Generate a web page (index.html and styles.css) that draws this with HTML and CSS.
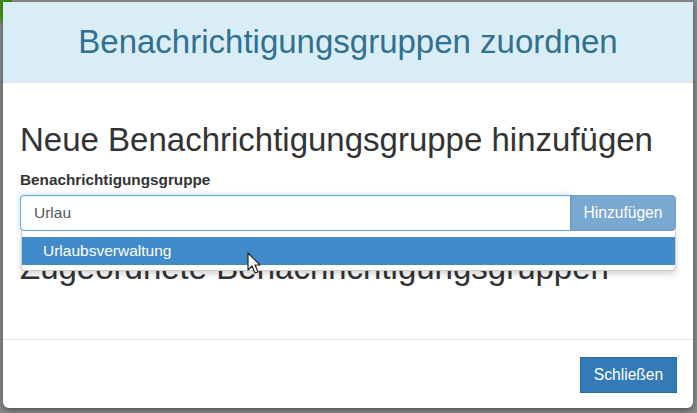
FILE: index.html
```html
<!DOCTYPE html>
<html lang="de">
<head>
  <meta charset="UTF-8">
  <meta name="viewport" content="width=device-width, initial-scale=1.0">
  <title>Benachrichtigungsgruppen zuordnen</title>
  <link rel="stylesheet" href="styles.css">
</head>
<body>
  <div class="backdrop-tab"></div>
  <div class="modal">
    <div class="modal-header">
      <h4 class="modal-title">Benachrichtigungsgruppen zuordnen</h4>
    </div>
    <div class="modal-body">
      <h2>Neue Benachrichtigungsgruppe hinzufügen</h2>
      <label class="control-label">Benachrichtigungsgruppe</label>
      <div class="input-wrap">
        <div class="input-group">
          <input type="text" class="form-control" value="Urlau">
          <button class="btn btn-primary" disabled>Hinzufügen</button>
        </div>
        <ul class="dropdown">
          <li class="active">Urlaubsverwaltung</li>
        </ul>
        <svg class="cursor" width="16" height="24" viewBox="0 0 16 24">
          <path d="M1 1 L1 18 L5 14 L8 21 L11 20 L8 13 L13 13 Z" fill="#fff" stroke="#222" stroke-width="1.2" stroke-linejoin="round"/>
        </svg>
      </div>
      <h2 class="assigned">Zugeordnete Benachrichtigungsgruppen</h2>
    </div>
    <div class="modal-footer">
      <button class="btn btn-primary">Schließen</button>
    </div>
  </div>
</body>
</html>
```

FILE: styles.css
```css
html, body {
  margin: 0;
  height: 100%;
}
body {
  background-color: #8b8b8b;
  font-family: "Liberation Sans", Arial, sans-serif;
  color: #333;
  overflow: hidden;
  position: relative;
}
.backdrop-tab {
  position: absolute;
  left: 0;
  top: 0;
  width: 12px;
  height: 22px;
  background: linear-gradient(#3d8a12, #5aa51e);
}
.modal {
  position: relative;
  margin: 2px 4px 0 3px;
  height: 406px;
  background-color: #fff;
  border-radius: 0 0 6px 6px;
  box-shadow: 0 2px 6px rgba(0, 0, 0, 0.45);
  display: flex;
  flex-direction: column;
}
.modal-header {
  height: 80px;
  background-color: #d9edf7;
  border-bottom: 1px solid #e5e5e5;
  display: flex;
  align-items: center;
  justify-content: center;
}
.modal-title {
  margin: 0;
  font-size: 33px;
  font-weight: normal;
  color: #31708f;
}
.modal-body {
  flex: 1;
  padding: 0 17px;
  overflow: hidden;
}
.modal-body h2 {
  margin: 37px 0 0;
  font-size: 33px;
  font-weight: normal;
  line-height: 40px;
  color: #333;
}
.control-label {
  display: block;
  margin-top: 11px;
  font-size: 15.3px;
  font-weight: bold;
  color: #333;
}
.input-wrap {
  position: relative;
  margin-top: 6px;
}
.input-group {
  display: flex;
  height: 36px;
}
.form-control {
  flex: 1;
  margin: 0;
  padding: 0 13px;
  font-family: inherit;
  font-size: 15.5px;
  color: #555;
  border: 1px solid #66afe9;
  border-right: none;
  border-radius: 4px 0 0 4px;
  outline: none;
  box-shadow: inset 0 1px 1px rgba(0, 0, 0, 0.075), 0 0 5px rgba(102, 175, 233, 0.5);
}
.btn {
  font-family: inherit;
  font-size: 15.6px;
  border: 1px solid #2e6da4;
  color: #fff;
  background-color: #337ab7;
  padding: 0 12px;
}
.input-group .btn {
  border-radius: 0 4px 4px 0;
  width: 106px;
}
.btn[disabled] {
  opacity: 0.65;
}
.dropdown {
  position: absolute;
  top: 36px;
  left: 1px;
  right: 0;
  margin: 0;
  padding: 6px 0 5px;
  list-style: none;
  background-color: #fff;
  border: 1px solid #ccc;
  border-top: none;
  border-radius: 0 0 4px 4px;
  box-shadow: 0 3px 6px rgba(0, 0, 0, 0.175);
  z-index: 2;
}
.dropdown li {
  padding: 0 21px;
  height: 28px;
  line-height: 28px;
  font-size: 15.5px;
}
.dropdown li.active {
  background-color: #428bca;
  color: #fff;
}
.cursor {
  position: absolute;
  left: 227px;
  top: 57px;
  z-index: 3;
}
.modal-body h2.assigned {
  margin-top: 17px;
}
.modal-footer {
  height: 68px;
  border-top: 1px solid #e5e5e5;
  display: flex;
  align-items: center;
  justify-content: flex-end;
  padding: 0 16px;
}
.modal-footer .btn {
  height: 36px;
  width: 97px;
  border-radius: 0;
  margin-top: 2px;
}
```
